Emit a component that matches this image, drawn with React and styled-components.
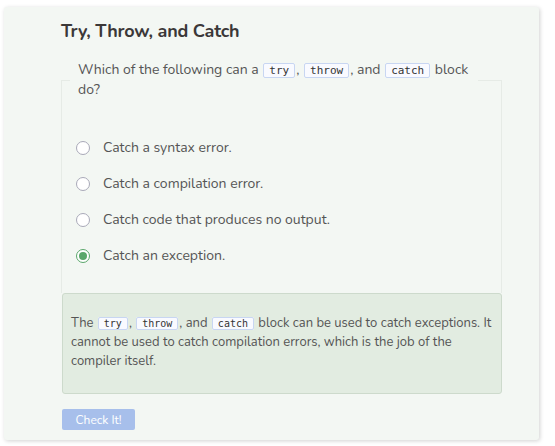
import React from 'react';
import styled, { createGlobalStyle } from 'styled-components';

const GlobalStyle = createGlobalStyle`
	body {
		margin: 0;
		background: #ffffff;
		font-family: "Nunito", Lato, "Noto Sans", sans-serif;
	}
`;

const Page = styled.div`
	padding: 7px 16px 6px 4px;
`;

const Card = styled.section`
	background: #f3f7f3;
	border-radius: 3px;
	box-shadow: 1px 1px 4px rgba(0, 0, 0, 0.18);
	padding: 13px 37px 10px 57px;
	height: 433px;
	box-sizing: border-box;
`;

const Title = styled.h2`
	margin: 0 0 18px;
	font-size: 18px;
	font-weight: 700;
	color: #3b3838;
	line-height: 22px;
	letter-spacing: -0.2px;
`;

const Question = styled.fieldset`
	margin: 0;
	padding: 0 0 12px 14px;
	border: 1px solid #e6ebe6;
	border-bottom: none;
	min-height: 233px;
	box-sizing: border-box;
`;

const Prompt = styled.legend`
	padding: 0 5px 0 8px;
	margin-left: -6px;
	font-size: 14px;
	line-height: 20px;
	color: #555;
	max-width: 395px;
`;

const Code = styled.code`
	font-family: "DejaVu Sans Mono", "Liberation Mono", monospace;
	font-size: ${(p) => (p.small ? '10px' : '11px')};
	line-height: 12px;
	background: #f9faff;
	border: 1px solid #c8d6f2;
	border-radius: 2px;
	padding: 0 5px;
	margin: 0 1px;
	color: #333;
`;

const Options = styled.div`
	display: flex;
	flex-direction: column;
	gap: 16px;
	padding-top: 38px;
`;

const Option = styled.label`
	display: flex;
	align-items: center;
	gap: 13px;
	font-size: 14px;
	line-height: 20px;
	color: #555;
`;

const Radio = styled.span`
	width: 12px;
	height: 12px;
	border-radius: 50%;
	border: 1px solid ${(p) => (p.checked ? '#5aa76b' : '#a9a9b8')};
	background: #fff;
	display: flex;
	align-items: center;
	justify-content: center;
	&::after {
		content: '';
		width: 8px;
		height: 8px;
		border-radius: 50%;
		background: ${(p) => (p.checked ? '#5aa76b' : 'transparent')};
	}
`;

const Feedback = styled.div`
	background: #e2ece1;
	border: 1px solid #cddacc;
	border-radius: 3px;
	padding: 20px 8px 22px 8px;
	font-size: 13px;
	line-height: 19px;
	color: #555;
	margin-left: 1px;
`;

const Button = styled.button`
	margin-top: 15px;
	margin-left: 1px;
	background: #a7bfeb;
	color: #fff;
	border: none;
	border-radius: 2px;
	font-family: inherit;
	font-size: 12px;
	width: 73px;
	height: 21px;
	padding: 0;
`;

const choices = [
	'Catch a syntax error.',
	'Catch a compilation error.',
	'Catch code that produces no output.',
	'Catch an exception.'
];

const App = () => {
	const selected = 3;
	return (
		<Page>
			<GlobalStyle />
			<Card>
				<Title>Try, Throw, and Catch</Title>
				<Question>
					<Prompt>
						Which of the following can a <Code>try</Code>, <Code>throw</Code>, and <Code>catch</Code> block do?
					</Prompt>
					<Options>
						{choices.map((c, i) => (
							<Option key={c}>
								<Radio checked={i === selected} />
								{c}
							</Option>
						))}
					</Options>
				</Question>
				<Feedback>
					The <Code small>try</Code>, <Code small>throw</Code>, and <Code small>catch</Code> block can be used to catch exceptions. It cannot be used to catch compilation errors, which is the job of the compiler itself.
				</Feedback>
				<Button>Check It!</Button>
			</Card>
		</Page>
	);
};

export default App;
